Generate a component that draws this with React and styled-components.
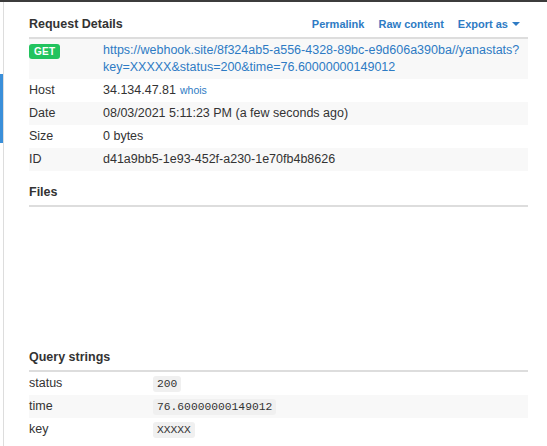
import React from 'react';
import styled, { createGlobalStyle } from 'styled-components';

const request = {
  method: 'GET',
  url: 'https://webhook.site/8f324ab5-a556-4328-89bc-e9d606a390ba//yanastats?key=XXXXX&status=200&time=76.60000000149012',
  host: '34.134.47.81',
  date: '08/03/2021 5:11:23 PM (a few seconds ago)',
  size: '0 bytes',
  id: 'd41a9bb5-1e93-452f-a230-1e70fb4b8626'
};

const query = [
  { name: 'status', value: '200' },
  { name: 'time', value: '76.60000000149012' },
  { name: 'key', value: 'XXXXX' }
];

const GlobalStyle = createGlobalStyle`
  body {
    margin: 0;
    background: #fff;
    font-family: "Liberation Sans", Arial, sans-serif;
    color: #333;
  }
`;

const Page = styled.div`
  display: flex;
  min-height: 446px;
  border-top: 2px solid #3c3c3c;
  box-sizing: border-box;
`;

const Sidebar = styled.div`
  width: 3px;
  border-right: 1px solid #ddd;
  flex-shrink: 0;
`;

const SelectedItem = styled.div`
  margin-top: 72px;
  height: 69px;
  background: #3a8fd9;
`;

const Main = styled.div`
  flex: 1;
  padding: 0 19px 0 25px;
  font-size: 12.5px;
`;

const SectionHead = styled.div`
  display: flex;
  align-items: baseline;
  justify-content: space-between;
  margin-top: ${p => p.gap || 0}px;
  padding: ${p => p.top || 0}px 0 4px;
  line-height: 18px;
  border-bottom: 2px solid #ddd;
`;

const Title = styled.div`
  font-weight: bold;
  font-size: 12.5px;
`;

const Links = styled.div`
  display: flex;
  gap: 14px;
  margin-right: 8px;
  font-size: 11px;
  font-weight: bold;
`;

const HeadLink = styled.a`
  color: #2e7bc4;
  text-decoration: none;
  display: flex;
  align-items: center;
  gap: 4px;
`;

const Caret = styled.span`
  width: 0;
  height: 0;
  border-left: 4px solid transparent;
  border-right: 4px solid transparent;
  border-top: 4px solid #2e7bc4;
`;

const Table = styled.div`
  display: grid;
  grid-template-columns: ${p => p.labelWidth}px 1fr;
`;

const Row = styled.div`
  display: contents;
  & > div {
    padding: 3px 0;
    line-height: 17px;
    background: ${p => (p.striped ? '#f8f8f8' : 'transparent')};
  }
`;

const Cell = styled.div`
  overflow-wrap: anywhere;
`;

const Method = styled.span`
  display: inline-block;
  margin-top: 2px;
  padding: 0 5px;
  line-height: 15px;
  border-radius: 3px;
  background: #22c35e;
  color: #fff;
  font-size: 10px;
  font-weight: bold;
  letter-spacing: 0.3px;
`;

const Url = styled.a`
  color: #2e7bc4;
  text-decoration: none;
`;

const Small = styled.a`
  margin-left: 4px;
  color: #2e7bc4;
  font-size: 10.5px;
  text-decoration: none;
`;

const FilesBody = styled.div`
  height: 141px;
`;

const Code = styled.code`
  display: inline-block;
  padding: 0 4px;
  line-height: 16px;
  border-radius: 3px;
  background: #f0f0f0;
  color: #333;
  font-family: "Liberation Mono", "Courier New", monospace;
  font-size: 11.3px;
`;

export default function App() {
  const [path, qs] = request.url.split('?');
  return (
    <>
      <GlobalStyle />
      <Page>
        <Sidebar>
          <SelectedItem />
        </Sidebar>
        <Main>
          <SectionHead top={13}>
            <Title>Request Details</Title>
            <Links>
              <HeadLink href="#">Permalink</HeadLink>
              <HeadLink href="#">Raw content</HeadLink>
              <HeadLink href="#">
                Export as <Caret />
              </HeadLink>
            </Links>
          </SectionHead>
          <Table labelWidth={74}>
            <Row striped>
              <Cell>
                <Method>{request.method}</Method>
              </Cell>
              <Cell>
                <Url href="#">
                  {path}?<wbr />
                  {qs}
                </Url>
              </Cell>
            </Row>
            <Row>
              <Cell>Host</Cell>
              <Cell>
                {request.host}
                <Small href="#">whois</Small>
              </Cell>
            </Row>
            <Row striped>
              <Cell>Date</Cell>
              <Cell>{request.date}</Cell>
            </Row>
            <Row>
              <Cell>Size</Cell>
              <Cell>{request.size}</Cell>
            </Row>
            <Row striped>
              <Cell>ID</Cell>
              <Cell>{request.id}</Cell>
            </Row>
          </Table>

          <SectionHead gap={12}>
            <Title>Files</Title>
          </SectionHead>
          <FilesBody />

          <SectionHead>
            <Title>Query strings</Title>
          </SectionHead>
          <Table labelWidth={124}>
            {query.map((q, i) => (
              <Row key={q.name} striped={i % 2 === 1}>
                <Cell>{q.name}</Cell>
                <Cell>
                  <Code>{q.value}</Code>
                </Cell>
              </Row>
            ))}
          </Table>
        </Main>
      </Page>
    </>
  );
}
